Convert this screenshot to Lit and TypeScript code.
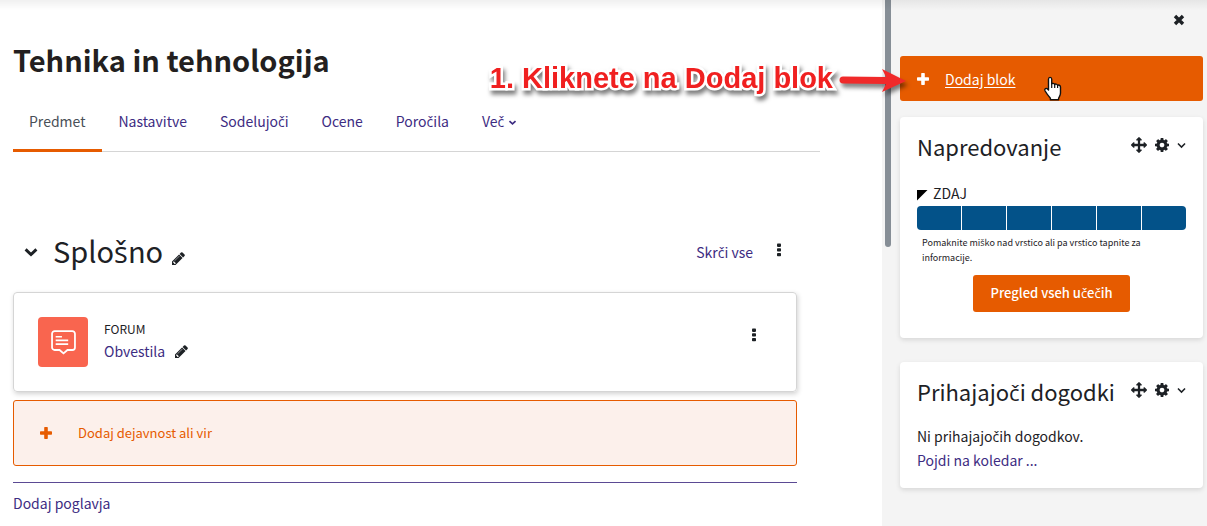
import { LitElement, html, css, svg } from "lit";
import { customElement, property } from "lit/decorators.js";

// Icon outlines, keyed by name: [viewBox, drawing]
const ICONS: Record<string, [string, unknown]> = {
  plus: ["0 0 12 12", svg`<rect x="4.2" y="0" width="3.6" height="12" rx=".7"/><rect x="0" y="4.2" width="12" height="3.6" rx=".7"/>`],
  close: ["0 0 12 12", svg`<path d="M2 2 10 10M10 2 2 10" fill="none" stroke="currentColor" stroke-width="3.4"/>`],
  chevron: ["0 0 16 16", svg`<path d="M2.6 5.4 8 10.6 13.4 5.4" fill="none" stroke="currentColor" stroke-width="2.9"/>`],
  chevronThin: ["1 1 14 14", svg`<path d="M2.5 5 8 10.5 13.5 5" fill="none" stroke="currentColor" stroke-width="2.4"/>`],
  dots: ["0 0 4 14", svg`<rect x="0" y="0.5" width="4" height="3.4" rx=".8"/><rect x="0" y="5.2" width="4" height="3.4" rx=".8"/><rect x="0" y="9.9" width="4" height="3.4" rx=".8"/>`],
  pencil: ["0 0 1536 1536", svg`<path d="M363 1408l91-91-235-235-91 91v107h128v128h107zM886 480q0-22-22-22-10 0-17 7l-542 542q-7 7-7 17 0 22 22 22 10 0 17-7l542-542q7-7 7-17zM832 288l416 416-832 832H0v-416zM1515 384q0 53-37 90l-166 166-416-416 166-165q36-38 90-38 53 0 91 38l235 234q37 39 37 91z"/>`],
  move: ["0 0 1792 1792", svg`<path d="M1792 896q0 26-19 45l-256 256q-19 19-45 19t-45-19-19-45v-128h-384v384h128q26 0 45 19t19 45-19 45l-256 256q-19 19-45 19t-45-19l-256-256q-19-19-19-45t19-45 45-19h128v-384H384v128q0 26-19 45t-45 19-45-19L19 941Q0 922 0 896t19-45l256-256q19-19 45-19t45 19 19 45v128h384V384H640q-26 0-45-19t-19-45 19-45L851 19q19-19 45-19t45 19l256 256q19 19 19 45t-19 45-45 19h-128v384h384V640q0-26 19-45t45-19 45 19l256 256q19 19 19 45z"/>`],
  gear: ["0 0 1536 1536", svg`<path d="M1024 768q0-106-75-181t-181-75-181 75-75 181 75 181 181 75 181-75 75-181zm512-109v222q0 12-8 23t-20 13l-185 28q-19 54-39 91 35 50 107 138 10 12 10 25t-9 23q-27 37-99 108t-94 71q-12 0-26-9l-138-108q-44 23-91 38-16 136-29 186-7 28-36 28H657q-14 0-24.500-8.500T621 1506l-28-184q-49-16-90-37l-141 107q-10 9-25 9-14 0-25-11-126-114-165-168-7-10-7-23 0-12 8-23 15-21 51-66.500t54-70.500q-27-50-41-99L29 913q-13-2-21-12.500T0 877V655q0-12 8-23t19-13l186-28q14-46 39-92-40-57-107-138-10-12-10-24 0-10 9-23 26-36 98.500-107.500T337 135q13 0 26 10l138 107q44-23 91-38 16-136 29-186 7-28 36-28h222q14 0 24.500 8.500T915 30l28 184q49 16 90 37l142-107q9-9 24-9 13 0 25 10 129 119 165 170 7 8 7 22 0 12-8 23-15 21-51 66.500t-54 70.500q26 50 41 98l183 28q13 2 21 12.500t8 23.500z"/>`],
  forum: ["0 0 24 24", svg`<path d="M3.500 1h17a2.500 2.500 0 0 1 2.500 2.500v13.200a2.500 2.500 0 0 1-2.500 2.500h-4.700L12 22.500l-3.800-3.300H3.500A2.500 2.500 0 0 1 1 16.700V3.500A2.500 2.500 0 0 1 3.500 1z" fill="none" stroke="currentColor" stroke-width="1.700"/><path d="M4.500 6.500h6M4.500 10h12M4.500 13.500h12" fill="none" stroke="currentColor" stroke-width="1.600"/>`],
};

const caron = css`
  .caron { font-family: "Open Sans", "Noto Sans", sans-serif; line-height: 1; }
`;
const sl = (text: string) =>
  text.split(/([čšžČŠŽ])/).map((part, i) => (i % 2 ? html`<span class="caron">${part}</span>` : part));

@customElement("ui-icon")
class UiIcon extends LitElement {
  @property() name = "plus";
  @property({ type: Number }) size = 12;
  static styles = css`
    :host { display: inline-flex; flex: none; }
    svg { display: block; fill: currentColor; width: auto; }
  `;
  render() {
    const [box, shape] = ICONS[this.name];
    return html`<svg viewBox=${box} height=${this.size} aria-hidden="true">${shape}</svg>`;
  }
}

@customElement("side-block")
class SideBlock extends LitElement {
  @property() heading = "";
  static styles = [caron, css`
    :host { display: block; background: #fff; border-radius: 4px; padding: 14px 17px 16px; box-shadow: 0 2px 5px rgba(0, 0, 0, 0.12); }
    .head { display: flex; align-items: center; justify-content: space-between; padding-bottom: 1px; }
    h3 { margin: 0; font-size: 22px; line-height: 30px; font-weight: 400; white-space: nowrap; }
    .tools { display: flex; align-items: center; gap: 8px; margin-bottom: 2px; }
    button { all: unset; display: flex; cursor: pointer; color: #1d2125; }
  `];
  render() {
    return html`
      <div class="head">
        <h3>${sl(this.heading)}</h3>
        <div class="tools">
          <button aria-label="Premakni"><ui-icon name="move" size="16"></ui-icon></button>
          <button aria-label="Možnosti"><ui-icon name="gear" size="14"></ui-icon></button>
          <button aria-label="Meni"><ui-icon name="chevronThin" size="9"></ui-icon></button>
        </div>
      </div>
      <slot></slot>
    `;
  }
}

@customElement("app-root")
class AppRoot extends LitElement {
  static styles = [caron, css`
    :host {
      display: block;
      position: relative;
      overflow: hidden;
      font: 400 14px/24px "Noto Sans CJK SC", "Noto Sans", sans-serif;
      color: #1d2125;
      background: #fff;
    }
    a { color: #3d2c82; text-decoration: none; }
    button { font: inherit; cursor: pointer; }
    .page { display: flex; min-height: 100vh; }
    main { flex: 1; min-width: 0; padding: 40px 62px 0 13px; }
    h1 { margin: 0; font-size: 29px; line-height: 38px; font-weight: 700; color: #231f20; }
    nav { display: flex; margin-top: 14px; border-bottom: 1px solid #d5d5d5; }
    .tab { padding: 17px 17px 16px 16px; border-bottom: 3px solid transparent; margin-bottom: -1px; white-space: nowrap; }
    .tab ui-icon { margin-left: 1px; }
    .tab.active { color: #495057; border-color: #e65b00; }
    .content { margin-right: 23px; }
    .section { display: flex; align-items: center; margin-top: 76px; height: 48px; }
    .toggle, .menu { background: none; border: 0; padding: 0; display: flex; color: #1d2125; }
    .toggle { margin: 0 14px 0 10px; }
    h2 { margin: 0 9px 4px 0; font-size: 29px; line-height: 40px; font-weight: 400; }
    .section .edit { margin-top: 12px; }
    .edit { color: #1d2125; display: flex; }
    .collapse { margin: 0 24px 0 auto; }
    .section .menu { margin: 0 16px 4px 0; }
    .activity { display: flex; align-items: center; margin-top: 16px; padding: 24px; border: 1px solid #d5d5d5; border-radius: 4px; box-shadow: 1px 2px 5px rgba(0, 0, 0, 0.18); }
    .badge { display: flex; align-items: center; justify-content: center; width: 50px; height: 50px; border-radius: 4px; background: #f9654f; color: #fff; margin-right: 16px; }
    .label { padding-bottom: 2px; }
    .kind { font-size: 12px; line-height: 20px; }
    .name { display: flex; align-items: center; gap: 10px; }
    .activity .menu { margin: 0 16px 15px auto; }
    .add { box-sizing: border-box; display: flex; align-items: center; gap: 26px; width: 100%; height: 66px; margin: 8px 0 16px; padding: 0 26px 1px; border: 1px solid #e65b00; border-radius: 3px; background: #fcf0eb; color: #e65b00; font-size: 13px; }
    .sections { border-top: 1px solid #5b4a94; padding: 8px 0 10px; }
    aside { box-sizing: border-box; width: 325px; flex: none; display: flex; gap: 9px; background: #f4f4f4; padding: 0 4px 0 3px; }
    .thumb { width: 6px; height: 247px; border-radius: 0 0 3px 3px; background: #868e96; flex: none; }
    .drawer { flex: 1; min-width: 0; padding-bottom: 38px; }
    .bar { display: flex; justify-content: flex-end; padding: 14px 18px 30px 0; }
    .new { display: flex; align-items: center; gap: 16px; height: 45px; padding: 0 17px; margin-bottom: 16px; border-radius: 3px; background: #e65b00; color: #fff; }
    .new span { text-decoration: underline; text-underline-offset: 2px; }
    .next { margin-top: 24px; }
    .now { display: flex; align-items: center; gap: 5px; margin-top: 19px; line-height: 24px; }
    .corner { width: 11px; height: 11px; background: #000; clip-path: polygon(0 0, 100% 0, 0 100%); margin-top: 4px; }
    .cells { display: grid; grid-template-columns: repeat(6, 1fr); gap: 1px; height: 24px; border-radius: 4px; overflow: hidden; margin-top: 1px; }
    .cell { background: #035289; }
    .hint { margin: 5px 5px 10px; font-size: 9px; line-height: 15px; width: 225px; }
    .overview { display: block; margin: 0 auto 10px; height: 37px; padding: 0 17px 1px; border: 0; border-radius: 3px; background: #e65b00; color: #fff; font-weight: 500; font-size: 13px; }
    .events { margin-top: 17px; }
    .veil { position: absolute; inset: 0 0 auto; height: 10px; background: linear-gradient(rgba(0, 0, 0, 0.06), transparent); }
    .callout { position: absolute; top: 63px; right: 374px; font: 700 29px/30px "Liberation Sans", Arial, sans-serif; color: #f02020; -webkit-text-stroke: 5px #fff; paint-order: stroke fill; filter: drop-shadow(2px 4px 2px rgba(0, 0, 0, 0.5)); white-space: nowrap; }
    .arrow { position: absolute; top: 66px; right: 298px; filter: drop-shadow(2px 4px 2px rgba(0, 0, 0, 0.5)); }
    .hand { position: absolute; top: 76px; right: 144px; }
  `];

  tabs = ["Predmet", "Nastavitve", "Sodelujoči", "Ocene", "Poročila"];

  render() {
    return html`
      <div class="page">
        <main>
          <h1>Tehnika in tehnologija</h1>
          <nav>
            ${this.tabs.map((t, i) => html`<a href="#" class="tab ${i === 0 ? "active" : ""}">${sl(t)}</a>`)}
            <a href="#" class="tab">${sl("Več")} <ui-icon name="chevron" size="9"></ui-icon></a>
          </nav>
          <div class="content">
            <div class="section">
              <button class="toggle" aria-label="Skrči"><ui-icon name="chevron" size="16"></ui-icon></button>
              <h2>${sl("Splošno")}</h2>
              <a href="#" class="edit" aria-label="Uredi ime poglavja"><ui-icon name="pencil" size="13"></ui-icon></a>
              <a href="#" class="collapse">${sl("Skrči vse")}</a>
              <button class="menu" aria-label="Uredi poglavje"><ui-icon name="dots" size="14"></ui-icon></button>
            </div>
            <div class="activity">
              <div class="badge"><ui-icon name="forum" size="25"></ui-icon></div>
              <div class="label">
                <div class="kind">FORUM</div>
                <div class="name">
                  <a href="#">Obvestila</a>
                  <a href="#" class="edit" aria-label="Uredi ime"><ui-icon name="pencil" size="13"></ui-icon></a>
                </div>
              </div>
              <button class="menu" aria-label="Uredi dejavnost"><ui-icon name="dots" size="14"></ui-icon></button>
            </div>
            <button class="add"><ui-icon name="plus" size="12"></ui-icon>Dodaj dejavnost ali vir</button>
            <div class="sections"><a href="#">Dodaj poglavja</a></div>
          </div>
        </main>
        <aside>
          <div class="thumb"></div>
          <div class="drawer">
            <div class="bar"><button class="menu" aria-label="Zapri"><ui-icon name="close" size="12"></ui-icon></button></div>
            <a href="#" class="new"><ui-icon name="plus" size="12"></ui-icon><span>Dodaj blok</span></a>
            <side-block heading="Napredovanje">
              <div class="now"><div class="corner"></div>ZDAJ</div>
              <div class="cells">${[1, 2, 3, 4, 5, 6].map(() => html`<div class="cell"></div>`)}</div>
              <p class="hint">${sl("Pomaknite miško nad vrstico ali pa vrstico tapnite za informacije.")}</p>
              <button class="overview">${sl("Pregled vseh učečih")}</button>
            </side-block>
            <side-block class="next" heading="Prihajajoči dogodki">
              <div class="events">${sl("Ni prihajajočih dogodkov.")}<br /><a href="#">Pojdi na koledar ...</a></div>
            </side-block>
          </div>
        </aside>
      </div>
      <div class="veil"></div>
      <div class="callout">1. Kliknete na Dodaj blok</div>
      <svg class="arrow" width="70" height="28" viewBox="0 0 70 28" aria-hidden="true">
        <path d="M4 10.500 47 11 43 3 67 15 43 26 47 18 4 17.500A3.500 3.500 0 0 1 4 10.500z" fill="#f02a2a" />
      </svg>
      <svg class="hand" width="20" height="26" viewBox="0 0 20 26" aria-hidden="true">
        <path d="M5.500 14V3.200C5.500.8 8.700.8 8.700 3.200V8c.4-1 2.700-.8 3 .6.500-.9 2.600-.6 2.900.8.700-.7 2.900-.3 2.900 1.700V17c0 2.500-1.200 3.700-1.900 5.200v1.500H7.400v-1.500C5.500 20 3.400 17.500 2 14.800 1 12.600 3.400 11.700 4.500 13z" fill="#fff" stroke="#111" stroke-width="1.400" stroke-linejoin="round" />
        <path d="M8.700 8v4M11.700 8.700v3.300M14.600 9.500V12" stroke="#111" stroke-width="1.200" />
      </svg>
    `;
  }
}
